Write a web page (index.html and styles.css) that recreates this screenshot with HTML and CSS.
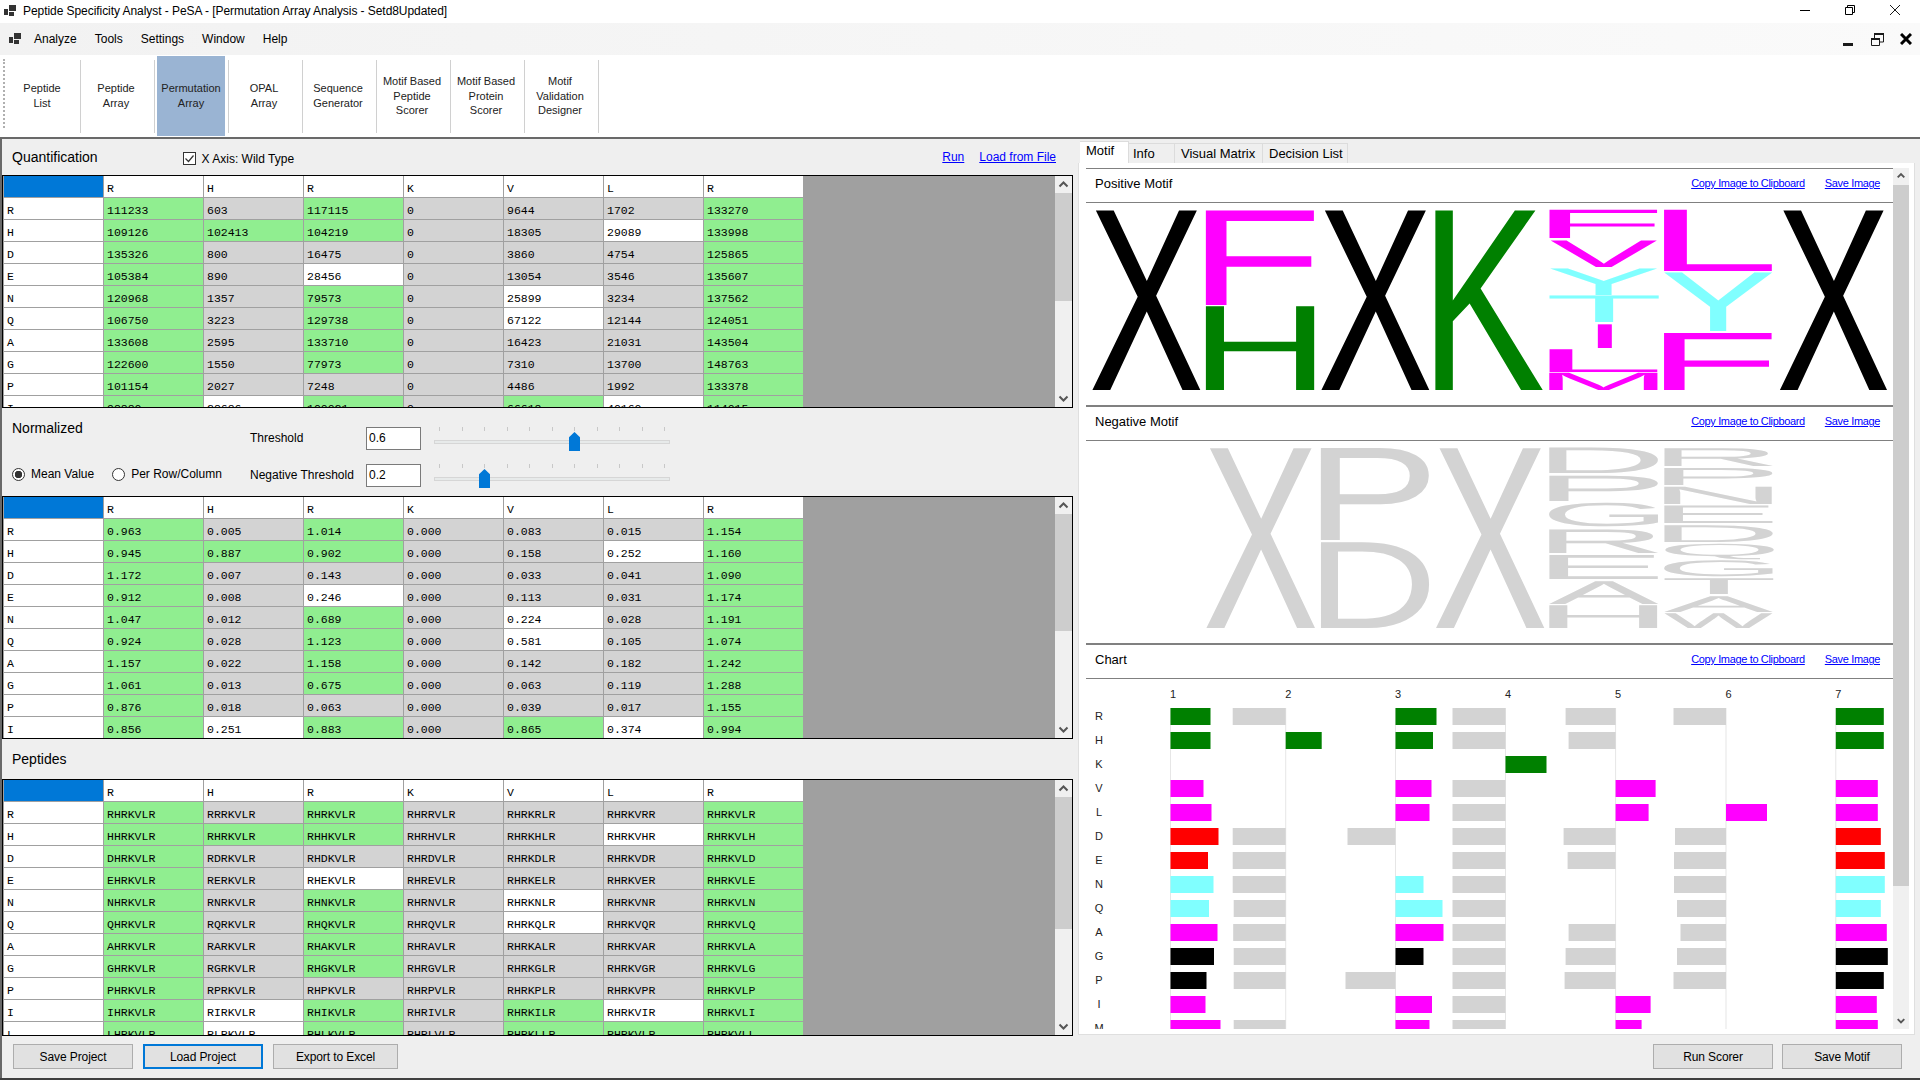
FILE: index.html
```html
<!DOCTYPE html>
<html lang="en">
<head>
    <meta charset="UTF-8">
    <title>Peptide Specificity Analyst - PeSA</title>
    <link rel="stylesheet" href="styles.css">
</head>
<body>
    <div class="titlebar">
        <svg class="app-icon title-icon" viewBox="0 0 12 12"><rect x="0" y="4" width="4" height="6"/><rect x="5" y="0" width="7" height="6"/><rect x="5" y="7" width="5" height="4"/></svg>
        <span class="title-text">Peptide Specificity Analyst - PeSA - [Permutation Array Analysis - Setd8Updated]</span>
        <div class="window-buttons">
            <svg width="10" height="10" viewBox="0 0 10 10"><path d="M0 5.5h10" stroke="#000" fill="none"/></svg>
            <svg width="10" height="10" viewBox="0 0 10 10"><path d="M.5 2.5h7v7h-7zM2.5 2.5v-2h7v7h-2" stroke="#000" fill="none"/></svg>
            <svg width="10" height="10" viewBox="0 0 10 10"><path d="M0 0l10 10M10 0L0 10" stroke="#000" stroke-width=".9" fill="none"/></svg>
        </div>
    </div>

    <div class="menubar">
        <svg class="app-icon menu-icon" viewBox="0 0 12 12"><rect x="0" y="4" width="4" height="6"/><rect x="5" y="0" width="7" height="6"/><rect x="5" y="7" width="5" height="4"/></svg>
        <span class="menu-item">Analyze</span>
        <span class="menu-item">Tools</span>
        <span class="menu-item">Settings</span>
        <span class="menu-item">Window</span>
        <span class="menu-item">Help</span>
        <div class="mdi-buttons">
            <svg width="10" height="3" viewBox="0 0 10 3"><rect width="10" height="3" fill="#1a1a1a"/></svg>
            <svg width="13" height="13" viewBox="0 0 13 13"><path d="M.5 5.5h8v7h-8zM3.5 5V.5h9V9H9" stroke="#1a1a1a" fill="none"/><rect x="0" y="5" width="9" height="2" fill="#1a1a1a"/><rect x="3" y="0" width="10" height="2" fill="#1a1a1a"/></svg>
            <svg width="12" height="12" viewBox="0 0 12 12"><path d="M1 1l10 10M11 1L1 11" stroke="#000" stroke-width="3" fill="none"/></svg>
        </div>
    </div>

    <div class="toolbar">
        <span class="grip"></span>
        <div class="tool">Peptide<br>List</div><span class="tool-sep"></span>
        <div class="tool">Peptide<br>Array</div><span class="tool-sep"></span>
        <div class="tool tool-active">Permutation<br>Array</div><span class="tool-sep"></span>
        <div class="tool">OPAL<br>Array</div><span class="tool-sep"></span>
        <div class="tool">Sequence<br>Generator</div><span class="tool-sep"></span>
        <div class="tool">Motif Based<br>Peptide<br>Scorer</div><span class="tool-sep"></span>
        <div class="tool">Motif Based<br>Protein<br>Scorer</div><span class="tool-sep"></span>
        <div class="tool">Motif<br>Validation<br>Designer</div><span class="tool-sep"></span>
    </div>

    <div class="workspace">
        <div class="left-pane">
            <div class="section-head quant-head">
                <span class="section-title">Quantification</span>
                <label class="check">
                    <svg width="13" height="13" viewBox="0 0 13 13"><rect x=".5" y=".5" width="12" height="12" fill="#fff" stroke="#333"/><path d="M2.5 6.5l3 3 5-6" stroke="#333" fill="none" stroke-width="1.2"/></svg>
                    X Axis: Wild Type
                </label>
                <span class="head-links"><a href="#">Run</a><a href="#">Load from File</a></span>
            </div>
            <div class="grid-frame quant-frame">
                <div class="cell-table" id="quantTable"></div>
                <div class="vscroll">
                    <svg class="arrow" viewBox="0 0 17 17"><path d="M4.5 10.5l4-4 4 4" stroke="#555" stroke-width="2" fill="none"/></svg>
                    <div class="thumb thumb-quant"></div>
                    <div class="scroll-rest"></div>
                    <svg class="arrow" viewBox="0 0 17 17"><path d="M4.5 6.5l4 4 4-4" stroke="#555" stroke-width="2" fill="none"/></svg>
                </div>
            </div>

            <div class="norm-head">
                <div class="norm-left">
                    <span class="section-title">Normalized</span>
                    <div class="radios">
                        <span class="radio radio-on">Mean Value</span>
                        <span class="radio">Per Row/Column</span>
                    </div>
                </div>
                <div class="norm-right">
                    <div class="threshold-row">
                        <span class="threshold-label">Threshold</span>
                        <span class="value-box">0.6</span>
                        <div class="slider">
                            <div class="ticks"><i></i><i></i><i></i><i></i><i></i><i></i><i></i><i></i><i></i><i></i><i></i></div>
                            <div class="track"></div>
                            <div class="slider-thumb thumb-high"></div>
                        </div>
                    </div>
                    <div class="threshold-row">
                        <span class="threshold-label">Negative Threshold</span>
                        <span class="value-box">0.2</span>
                        <div class="slider">
                            <div class="ticks"><i></i><i></i><i></i><i></i><i></i><i></i><i></i><i></i><i></i><i></i><i></i></div>
                            <div class="track"></div>
                            <div class="slider-thumb thumb-low"></div>
                        </div>
                    </div>
                </div>
            </div>
            <div class="grid-frame norm-frame">
                <div class="cell-table" id="normTable"></div>
                <div class="vscroll">
                    <svg class="arrow" viewBox="0 0 17 17"><path d="M4.5 10.5l4-4 4 4" stroke="#555" stroke-width="2" fill="none"/></svg>
                    <div class="thumb thumb-norm"></div>
                    <div class="scroll-rest"></div>
                    <svg class="arrow" viewBox="0 0 17 17"><path d="M4.5 6.5l4 4 4-4" stroke="#555" stroke-width="2" fill="none"/></svg>
                </div>
            </div>

            <div class="section-head peptide-head">
                <span class="section-title">Peptides</span>
            </div>
            <div class="grid-frame peptide-frame">
                <div class="cell-table" id="peptideTable"></div>
                <div class="vscroll">
                    <svg class="arrow" viewBox="0 0 17 17"><path d="M4.5 10.5l4-4 4 4" stroke="#555" stroke-width="2" fill="none"/></svg>
                    <div class="thumb thumb-peptide"></div>
                    <div class="scroll-rest"></div>
                    <svg class="arrow" viewBox="0 0 17 17"><path d="M4.5 6.5l4 4 4-4" stroke="#555" stroke-width="2" fill="none"/></svg>
                </div>
            </div>

            <div class="button-row">
                <button class="btn">Save Project</button>
                <button class="btn btn-focus">Load Project</button>
                <button class="btn btn-wide">Export to Excel</button>
            </div>
        </div>

        <div class="right-pane">
            <div class="tabs">
                <span class="tab tab-active">Motif</span>
                <span class="tab tab-info">Info</span>
                <span class="tab tab-matrix">Visual Matrix</span>
                <span class="tab tab-decision">Decision List</span>
            </div>
            <div class="tab-panel">
                <div class="motif-column">
                    <div class="motif-head motif-head-first">
                        <span class="motif-title">Positive Motif</span>
                        <span class="motif-links"><a href="#">Copy Image to Clipboard</a><a href="#">Save Image</a></span>
                    </div>
                    <svg class="logo" id="positiveLogo" viewBox="1086 203 807 202"></svg>
                    <div class="motif-head">
                        <span class="motif-title">Negative Motif</span>
                        <span class="motif-links"><a href="#">Copy Image to Clipboard</a><a href="#">Save Image</a></span>
                    </div>
                    <svg class="logo" id="negativeLogo" viewBox="1086 441 807 202"></svg>
                    <div class="motif-head">
                        <span class="motif-title">Chart</span>
                        <span class="motif-links"><a href="#">Copy Image to Clipboard</a><a href="#">Save Image</a></span>
                    </div>
                    <svg class="chart" id="motifChart" viewBox="1086 679 807 350"></svg>
                </div>
                <div class="vscroll panel-scroll">
                    <svg class="arrow" viewBox="0 0 17 17"><path d="M5 9.5l3.5-3.5 3.5 3.5" stroke="#555" stroke-width="2" fill="none"/></svg>
                    <div class="thumb thumb-panel"></div>
                    <div class="scroll-rest"></div>
                    <svg class="arrow" viewBox="0 0 17 17"><path d="M5 7l3.5 3.5 3.5-3.5" stroke="#555" stroke-width="2" fill="none"/></svg>
                </div>
            </div>
            <div class="button-row button-row-right">
                <button class="btn">Run Scorer</button>
                <button class="btn">Save Motif</button>
            </div>
        </div>
    </div>

    <script src="script.js"></script>
</body>
</html>
```

FILE: styles.css
```css
html, body {
    margin: 0;
    padding: 0;
}
body {
    width: 1920px;
    height: 1080px;
    overflow: hidden;
    background-color: #f0f0f0;
    color: #000;
    font-family: "Liberation Sans", Arial, sans-serif;
    font-size: 12px;
}
.app-icon {
    width: 12px;
    height: 12px;
    fill: #333;
}

/* title + menu */
.titlebar {
    height: 23px;
    background-color: #fff;
    display: flex;
    align-items: center;
    padding-left: 4px;
}
.title-icon {
    margin-right: 7px;
    margin-top: -2px;
}
.title-text {
    font-size: 12px;
    letter-spacing: -.06px;
    margin-top: -1px;
}
.window-buttons {
    margin-left: auto;
    display: flex;
    gap: 35px;
    margin-right: 20px;
    margin-top: -3px;
}
.window-buttons svg {
    display: block;
}
.menubar {
    height: 32px;
    background: linear-gradient(90deg, #f2f2f2, #fafafa);
    display: flex;
    align-items: center;
    padding-left: 9px;
    gap: 18px;
}
.menu-icon {
    margin-right: -5px;
    margin-top: -1px;
}
.menu-item {
    font-size: 12px;
}
.mdi-buttons {
    margin-left: auto;
    margin-right: 8px;
    display: flex;
    align-items: center;
    gap: 16px;
}
.mdi-buttons svg {
    display: block;
}
.mdi-buttons svg:first-child {
    margin-top: 10px;
    margin-right: 2px;
}

/* toolbar */
.toolbar {
    height: 82px;
    background-color: #fff;
    display: flex;
    align-items: center;
    padding-left: 8px;
    position: relative;
}
.grip {
    position: absolute;
    left: 3px;
    top: 4px;
    height: 69px;
    border-left: 2px dotted #b0b0b0;
}
.tool {
    width: 68px;
    height: 80px;
    margin-right: 4px;
    display: flex;
    align-items: center;
    justify-content: center;
    text-align: center;
    font-size: 11px;
    line-height: 14.6px;
    color: #222;
}
.tool-active {
    background-color: #9ab4d3;
    margin-left: 1px;
    margin-right: 3px;
}
.tool-sep {
    width: 1px;
    height: 73px;
    background-color: #d0d0d0;
    margin-right: 1px;
}

/* main area */
.workspace {
    height: 943px;
    display: flex;
    border-top: 2px solid #696969;
    border-bottom: 2px solid #404040;
    box-sizing: border-box;
}
.left-pane {
    width: 1078px;
    border-left: 2px solid #696969;
    box-sizing: border-box;
    background-color: #efefef;
}
.section-head {
    display: flex;
    align-items: center;
    padding-left: 10px;
    padding-right: 22px;
}
.section-title {
    font-size: 14px;
}
.quant-head {
    height: 36px;
}
.check {
    display: flex;
    align-items: center;
    gap: 6px;
    margin-left: 85px;
    margin-top: 3px;
    font-size: 12px;
}
.head-links {
    margin-left: auto;
    display: flex;
    gap: 15px;
    font-size: 12px;
}
a {
    color: #00f;
    text-decoration: underline;
}
.peptide-head {
    height: 40px;
}

/* grids */
.grid-frame {
    width: 1071px;
    box-sizing: border-box;
    border: 1px solid #000;
    display: flex;
    background-color: #a0a0a0;
}
.quant-frame {
    height: 233px;
}
.norm-frame {
    height: 243px;
}
.peptide-frame {
    height: 257px;
}
.cell-table {
    flex: 1;
    display: grid;
    grid-template-columns: repeat(8, 100px);
    grid-auto-rows: 22px;
    overflow: hidden;
    padding-left: 1px;
}
.cell {
    background-color: #fff;
    border-right: 1px solid #a0a0a0;
    border-bottom: 1px solid #a0a0a0;
    box-sizing: border-box;
    font-family: "Liberation Mono", "Courier New", monospace;
    font-size: 11.5px;
    line-height: 25px;
    padding-left: 3px;
    white-space: nowrap;
    overflow: hidden;
}
.cell-corner {
    background-color: #0078d7;
}
.cell-green {
    background-color: #90ee90;
}
.cell-gray {
    background-color: #d3d3d3;
}

/* scrollbars */
.vscroll {
    width: 17px;
    background-color: #f0f0f0;
    display: flex;
    flex-direction: column;
    flex-shrink: 0;
}
.arrow {
    width: 17px;
    height: 17px;
    flex-shrink: 0;
}
.thumb {
    background-color: #cdcdcd;
}
.scroll-rest {
    flex: 1;
}
.thumb-quant {
    height: 108px;
}
.thumb-norm {
    height: 117px;
}
.thumb-peptide {
    height: 132px;
}
.panel-scroll {
    width: 16px;
}
.panel-scroll .arrow {
    width: 16px;
}
.thumb-panel {
    height: 701px;
}

/* normalized controls */
.norm-head {
    height: 88px;
    display: flex;
}
.norm-left {
    width: 248px;
    padding-left: 10px;
    padding-top: 12px;
    box-sizing: border-box;
    display: flex;
    flex-direction: column;
}
.radios {
    display: flex;
    gap: 18px;
    margin-top: 31px;
    font-size: 12px;
}
.radio {
    display: flex;
    align-items: center;
    gap: 6px;
}
.radio::before {
    content: "";
    width: 11px;
    height: 11px;
    border: 1px solid #333;
    border-radius: 50%;
    background-color: #fff;
}
.radio-on::before {
    background: radial-gradient(circle, #333 0 3.5px, #fff 4px);
}
.norm-right {
    padding-top: 19px;
    display: flex;
    flex-direction: column;
    gap: 14px;
}
.threshold-row {
    display: flex;
    align-items: center;
    height: 23px;
}
.threshold-label {
    width: 116px;
    font-size: 12px;
    margin-top: -2px;
}
.value-box {
    width: 55px;
    height: 23px;
    box-sizing: border-box;
    border: 1px solid #7a7a7a;
    background-color: #fff;
    font-size: 12px;
    line-height: 20px;
    padding-left: 2px;
}
.slider {
    width: 236px;
    height: 24px;
    margin-left: 13px;
    margin-top: 1px;
    position: relative;
}
.ticks {
    display: flex;
    justify-content: space-between;
    padding: 0 5px;
}
.ticks i {
    width: 1px;
    height: 4px;
    background-color: #c8c8c8;
}
.track {
    height: 4px;
    margin-top: 9px;
    box-sizing: border-box;
    background-color: #e7eaea;
    border: 1px solid #d6d6d6;
}
.slider-thumb {
    position: absolute;
    top: 5px;
    width: 11px;
    height: 19px;
    background-color: #0078d7;
    clip-path: polygon(50% 0, 100% 28%, 100% 100%, 0 100%, 0 28%);
}
.thumb-high {
    left: 135px;
}
.thumb-low {
    left: 45px;
}

/* buttons */
.button-row {
    display: flex;
    gap: 10px;
    padding-left: 11px;
    padding-top: 8px;
}
.btn {
    width: 120px;
    height: 25px;
    box-sizing: border-box;
    background-color: #e1e1e1;
    border: 1px solid #adadad;
    font-family: inherit;
    font-size: 12px;
    letter-spacing: -.1px;
    color: #000;
    padding: 0;
}
.btn-focus {
    border: 2px solid #0078d7;
}
.btn-wide {
    width: 125px;
}
.button-row-right {
    padding-left: 575px;
    gap: 9px;
    padding-top: 9px;
}

/* right side */
.right-pane {
    width: 842px;
    background-color: #efefef;
}
.tabs {
    height: 24px;
    display: flex;
    align-items: flex-end;
    padding-left: 2px;
}
.tab {
    height: 20px;
    box-sizing: border-box;
    border: 1px solid #dcdcdc;
    border-bottom: none;
    border-left: none;
    line-height: 20px;
    padding-left: 6px;
    font-size: 13px;
    white-space: nowrap;
}
.tab-active {
    height: 22px;
    width: 49px;
    background-color: #fff;
    line-height: 18px;
    padding-left: 6px;
}
.tab-info {
    width: 46px;
    padding-left: 4px;
}
.tab-matrix {
    width: 88px;
    padding-left: 6px;
}
.tab-decision {
    width: 85px;
    padding-left: 6px;
}
.tab-panel {
    width: 837px;
    height: 872px;
    box-sizing: border-box;
    background-color: #fff;
    border: 1px solid #dfdfdf;
    border-top: none;
    padding: 5px 6px 5px 7px;
    display: flex;
}
.motif-column {
    width: 807px;
    flex-shrink: 0;
    overflow: hidden;
    border-top: 1px solid #808080;
    box-sizing: border-box;
}
.motif-head {
    height: 36px;
    box-sizing: border-box;
    border-top: 2px solid #808080;
    border-bottom: 1px solid #808080;
    display: flex;
    align-items: center;
    padding-left: 9px;
    padding-right: 13px;
    padding-bottom: 5px;
}
.motif-head-first {
    height: 34px;
    border-top: none;
}
.motif-title {
    font-size: 13px;
}
.motif-links {
    margin-left: auto;
    display: flex;
    gap: 20px;
    font-size: 11px;
    letter-spacing: -.35px;
}
.logo {
    display: block;
    width: 807px;
    height: 202px;
}
.chart {
    display: block;
    width: 807px;
    height: 350px;
}
.logo text {
    font-family: "Liberation Sans", Arial, sans-serif;
    font-size: 100px;
    text-rendering: geometricPrecision;
}
.chart text {
    font-family: "Liberation Sans", Arial, sans-serif;
    font-size: 11px;
    fill: #222;
    text-anchor: middle;
}
```

FILE: script.js
```js
// Grid data: one string per cell, g = green, x = gray, w = white
const residues = ['R', 'H', 'D', 'E', 'N', 'Q', 'A', 'G', 'P', 'I', 'L'];
const wildType = 'RHRKVLR';
const shades = ['gxgxxxg', 'gggxxwg', 'gxxxxxg', 'gxwxxxg', 'gxgxwxg', 'gxgxwxg', 'gxgxxxg', 'gxgxxxg', 'gxxxxxg', 'gwgxgwg', 'gwgxggg'];

const quantValues = [
    ['111233', '603', '117115', '0', '9644', '1702', '133270'],
    ['109126', '102413', '104219', '0', '18305', '29089', '133998'],
    ['135326', '800', '16475', '0', '3860', '4754', '125865'],
    ['105384', '890', '28456', '0', '13054', '3546', '135607'],
    ['120968', '1357', '79573', '0', '25899', '3234', '137562'],
    ['106750', '3223', '129738', '0', '67122', '12144', '124051'],
    ['133608', '2595', '133710', '0', '16423', '21031', '143504'],
    ['122600', '1550', '77973', '0', '7310', '13700', '148763'],
    ['101154', '2027', '7248', '0', '4486', '1992', '133378'],
    ['98880', '28686', '100021', '0', '66618', '40160', '114015']
];
const normValues = [
    ['0.963', '0.005', '1.014', '0.000', '0.083', '0.015', '1.154'],
    ['0.945', '0.887', '0.902', '0.000', '0.158', '0.252', '1.160'],
    ['1.172', '0.007', '0.143', '0.000', '0.033', '0.041', '1.090'],
    ['0.912', '0.008', '0.246', '0.000', '0.113', '0.031', '1.174'],
    ['1.047', '0.012', '0.689', '0.000', '0.224', '0.028', '1.191'],
    ['0.924', '0.028', '1.123', '0.000', '0.581', '0.105', '1.074'],
    ['1.157', '0.022', '1.158', '0.000', '0.142', '0.182', '1.242'],
    ['1.061', '0.013', '0.675', '0.000', '0.063', '0.119', '1.288'],
    ['0.876', '0.018', '0.063', '0.000', '0.039', '0.017', '1.155'],
    ['0.856', '0.251', '0.883', '0.000', '0.865', '0.374', '0.994']
];
// Peptides are the wild type with one position swapped for the row residue
const peptideValues = residues.map(function (res) {
    return wildType.split('').map(function (_, i) {
        return wildType.slice(0, i) + res + wildType.slice(i + 1);
    });
});

function fillTable(id, values) {
    const table = document.getElementById(id);
    let html = '<div class="cell cell-corner"></div>';
    wildType.split('').forEach(function (c) {
        html += '<div class="cell">' + c + '</div>';
    });
    values.forEach(function (row, r) {
        html += '<div class="cell">' + residues[r] + '</div>';
        row.forEach(function (v, c) {
            const shade = shades[r][c];
            const cls = shade === 'g' ? ' cell-green' : shade === 'x' ? ' cell-gray' : '';
            html += '<div class="cell' + cls + '">' + v + '</div>';
        });
    });
    table.innerHTML = html;
}

fillTable('quantTable', quantValues);
fillTable('normTable', normValues);
fillTable('peptideTable', peptideValues);

// Logos. Each letter is [glyph, left, top, right, bottom, colour] in page pixels
const MAGENTA = '#ff00ff', GREEN = '#008000', CYAN = '#80ffff', BLACK = '#000000', GRAY = '#d3d3d3', RED = '#ff0000';
const positiveLetters = [
    ['X', 1092, 210, 1201, 390, BLACK],
    ['F', 1205.5, 210, 1316, 304.7, MAGENTA],
    ['H', 1205.5, 306, 1316, 390, GREEN],
    ['X', 1321, 210, 1430, 390, BLACK],
    ['K', 1435, 210, 1543.5, 390, GREEN],
    ['F', 1549, 210, 1659, 238.3, MAGENTA],
    ['V', 1550, 240, 1658, 266.7, MAGENTA],
    ['Y', 1550, 268, 1658, 294.7, CYAN],
    ['T', 1549, 295.7, 1659, 322.7, CYAN],
    ['I', 1597.4, 324, 1612.4, 347.7, MAGENTA],
    ['L', 1549, 349, 1659, 371.7, MAGENTA],
    ['M', 1549, 372.7, 1659, 390, MAGENTA],
    ['L', 1663.5, 210, 1773.5, 271.3, MAGENTA],
    ['Y', 1664, 272.7, 1773, 331.3, CYAN],
    ['F', 1663.5, 332.7, 1773.5, 390, MAGENTA],
    ['X', 1779.5, 210, 1887.7, 390, BLACK]
];
const negativeLetters = [
    ['X', 1206, 447.7, 1315.7, 628, GRAY],
    ['P', 1320.5, 447.7, 1430, 540, GRAY],
    ['D', 1320.5, 542, 1430, 628, GRAY],
    ['X', 1435.6, 447.7, 1545, 628, GRAY],
    ['D', 1549, 447.7, 1659, 473.3, GRAY],
    ['P', 1549, 475.3, 1659, 500.7, GRAY],
    ['G', 1549, 502.3, 1659, 526, GRAY],
    ['R', 1549, 529.3, 1659, 553.3, GRAY],
    ['E', 1549, 555, 1659, 579, GRAY],
    ['A', 1549, 581, 1659, 603.7, GRAY],
    ['H', 1549, 605.3, 1659, 628, GRAY],
    ['R', 1664, 448, 1773.6, 466, GRAY],
    ['P', 1664, 468, 1773.6, 485, GRAY],
    ['N', 1664, 486.7, 1773.6, 504, GRAY],
    ['E', 1664, 505.7, 1773.6, 523.3, GRAY],
    ['D', 1664, 525, 1773.6, 541.7, GRAY],
    ['Q', 1664, 543.3, 1773.6, 559, GRAY],
    ['G', 1664, 560.7, 1773.6, 576.7, GRAY],
    ['T', 1664, 578.3, 1773.6, 594.3, GRAY],
    ['A', 1664, 596, 1773.6, 611.7, GRAY],
    ['W', 1664, 613.3, 1773.6, 628, GRAY]
];

const SVG_NS = 'http://www.w3.org/2000/svg';
const ruler = document.createElement('canvas').getContext('2d');
ruler.font = '100px "Liberation Sans"';

function drawLogo(id, letters) {
    const svg = document.getElementById(id);
    letters.forEach(function (l) {
        // stretch the glyph's ink box onto the letter's rectangle
        const m = ruler.measureText(l[0]);
        const inkW = m.actualBoundingBoxLeft + m.actualBoundingBoxRight;
        const inkH = m.actualBoundingBoxAscent + m.actualBoundingBoxDescent;
        const sx = (l[3] - l[1]) / inkW;
        const sy = (l[4] - l[2]) / inkH;
        const tx = l[1] + m.actualBoundingBoxLeft * sx;
        const ty = l[2] + m.actualBoundingBoxAscent * sy;
        const t = document.createElementNS(SVG_NS, 'text');
        t.setAttribute('transform', 'translate(' + tx + ' ' + ty + ') scale(' + sx + ' ' + sy + ')');
        t.setAttribute('fill', l[5]);
        t.textContent = l[0];
        svg.appendChild(t);
    });
}

drawLogo('positiveLogo', positiveLetters);
drawLogo('negativeLogo', negativeLetters);

// Chart. Bars are [axis number, signed width]; negative ones run left of the axis
const axes = [1170.5, 1285.7, 1395.5, 1505.5, 1615.6, 1726, 1835.8];
const chartRows = [
    ['R', GREEN, [[1, 40], [2, -53], [3, 41], [4, -53], [5, -50], [6, -52.5], [7, 48]]],
    ['H', GREEN, [[1, 40], [2, 36], [3, 37.5], [4, -53], [5, -47], [7, 48]]],
    ['K', GREEN, [[4, 41]]],
    ['V', MAGENTA, [[1, 33], [3, 36], [4, -53], [5, 40], [7, 42]]],
    ['L', MAGENTA, [[1, 41], [3, 34], [4, -53], [5, 33], [6, 41], [7, 42]]],
    ['D', RED, [[1, 48], [2, -53], [3, -48], [4, -53], [5, -52], [6, -51], [7, 45]]],
    ['E', RED, [[1, 37.5], [2, -53], [4, -53], [5, -48], [6, -52], [7, 49]]],
    ['N', CYAN, [[1, 43], [2, -53], [3, 28], [4, -53], [6, -52], [7, 49]]],
    ['Q', CYAN, [[1, 38.5], [2, -52], [3, 47], [4, -53], [6, -49], [7, 45]]],
    ['A', MAGENTA, [[1, 47], [2, -52.5], [3, 48], [4, -53], [5, -47], [6, -45.5], [7, 51]]],
    ['G', BLACK, [[1, 43.5], [2, -52], [3, 28], [4, -53], [5, -50], [6, -49], [7, 52]]],
    ['P', BLACK, [[1, 36], [2, -52], [3, -50], [4, -53], [5, -51], [6, -52.5], [7, 48]]],
    ['I', MAGENTA, [[1, 35], [3, 36.5], [4, -53], [5, 35], [7, 41]]],
    ['M', MAGENTA, [[1, 50], [2, -52], [3, 34], [4, -53], [5, 26], [7, 42]]]
];

function svgEl(name, attrs, text) {
    const el = document.createElementNS(SVG_NS, name);
    Object.keys(attrs).forEach(function (k) {
        el.setAttribute(k, attrs[k]);
    });
    if (text) {
        el.textContent = text;
    }
    return el;
}

function drawChart() {
    const svg = document.getElementById('motifChart');
    axes.forEach(function (x, i) {
        svg.appendChild(svgEl('rect', { x: x - .5, y: 708, width: 1, height: 321, fill: '#e6e6e6' }));
        svg.appendChild(svgEl('text', { x: x + 2.5, y: 698 }, String(i + 1)));
    });
    chartRows.forEach(function (row, r) {
        const top = 708 + r * 24;
        svg.appendChild(svgEl('text', { x: 1099, y: top + 11.5 }, row[0]));
        row[2].forEach(function (bar) {
            const axis = axes[bar[0] - 1];
            const w = bar[1];
            svg.appendChild(svgEl('rect', {
                x: w < 0 ? axis + w : axis,
                y: top,
                width: Math.abs(w),
                height: 17,
                fill: w < 0 ? GRAY : row[1]
            }));
        });
    });
}

drawChart();
```
